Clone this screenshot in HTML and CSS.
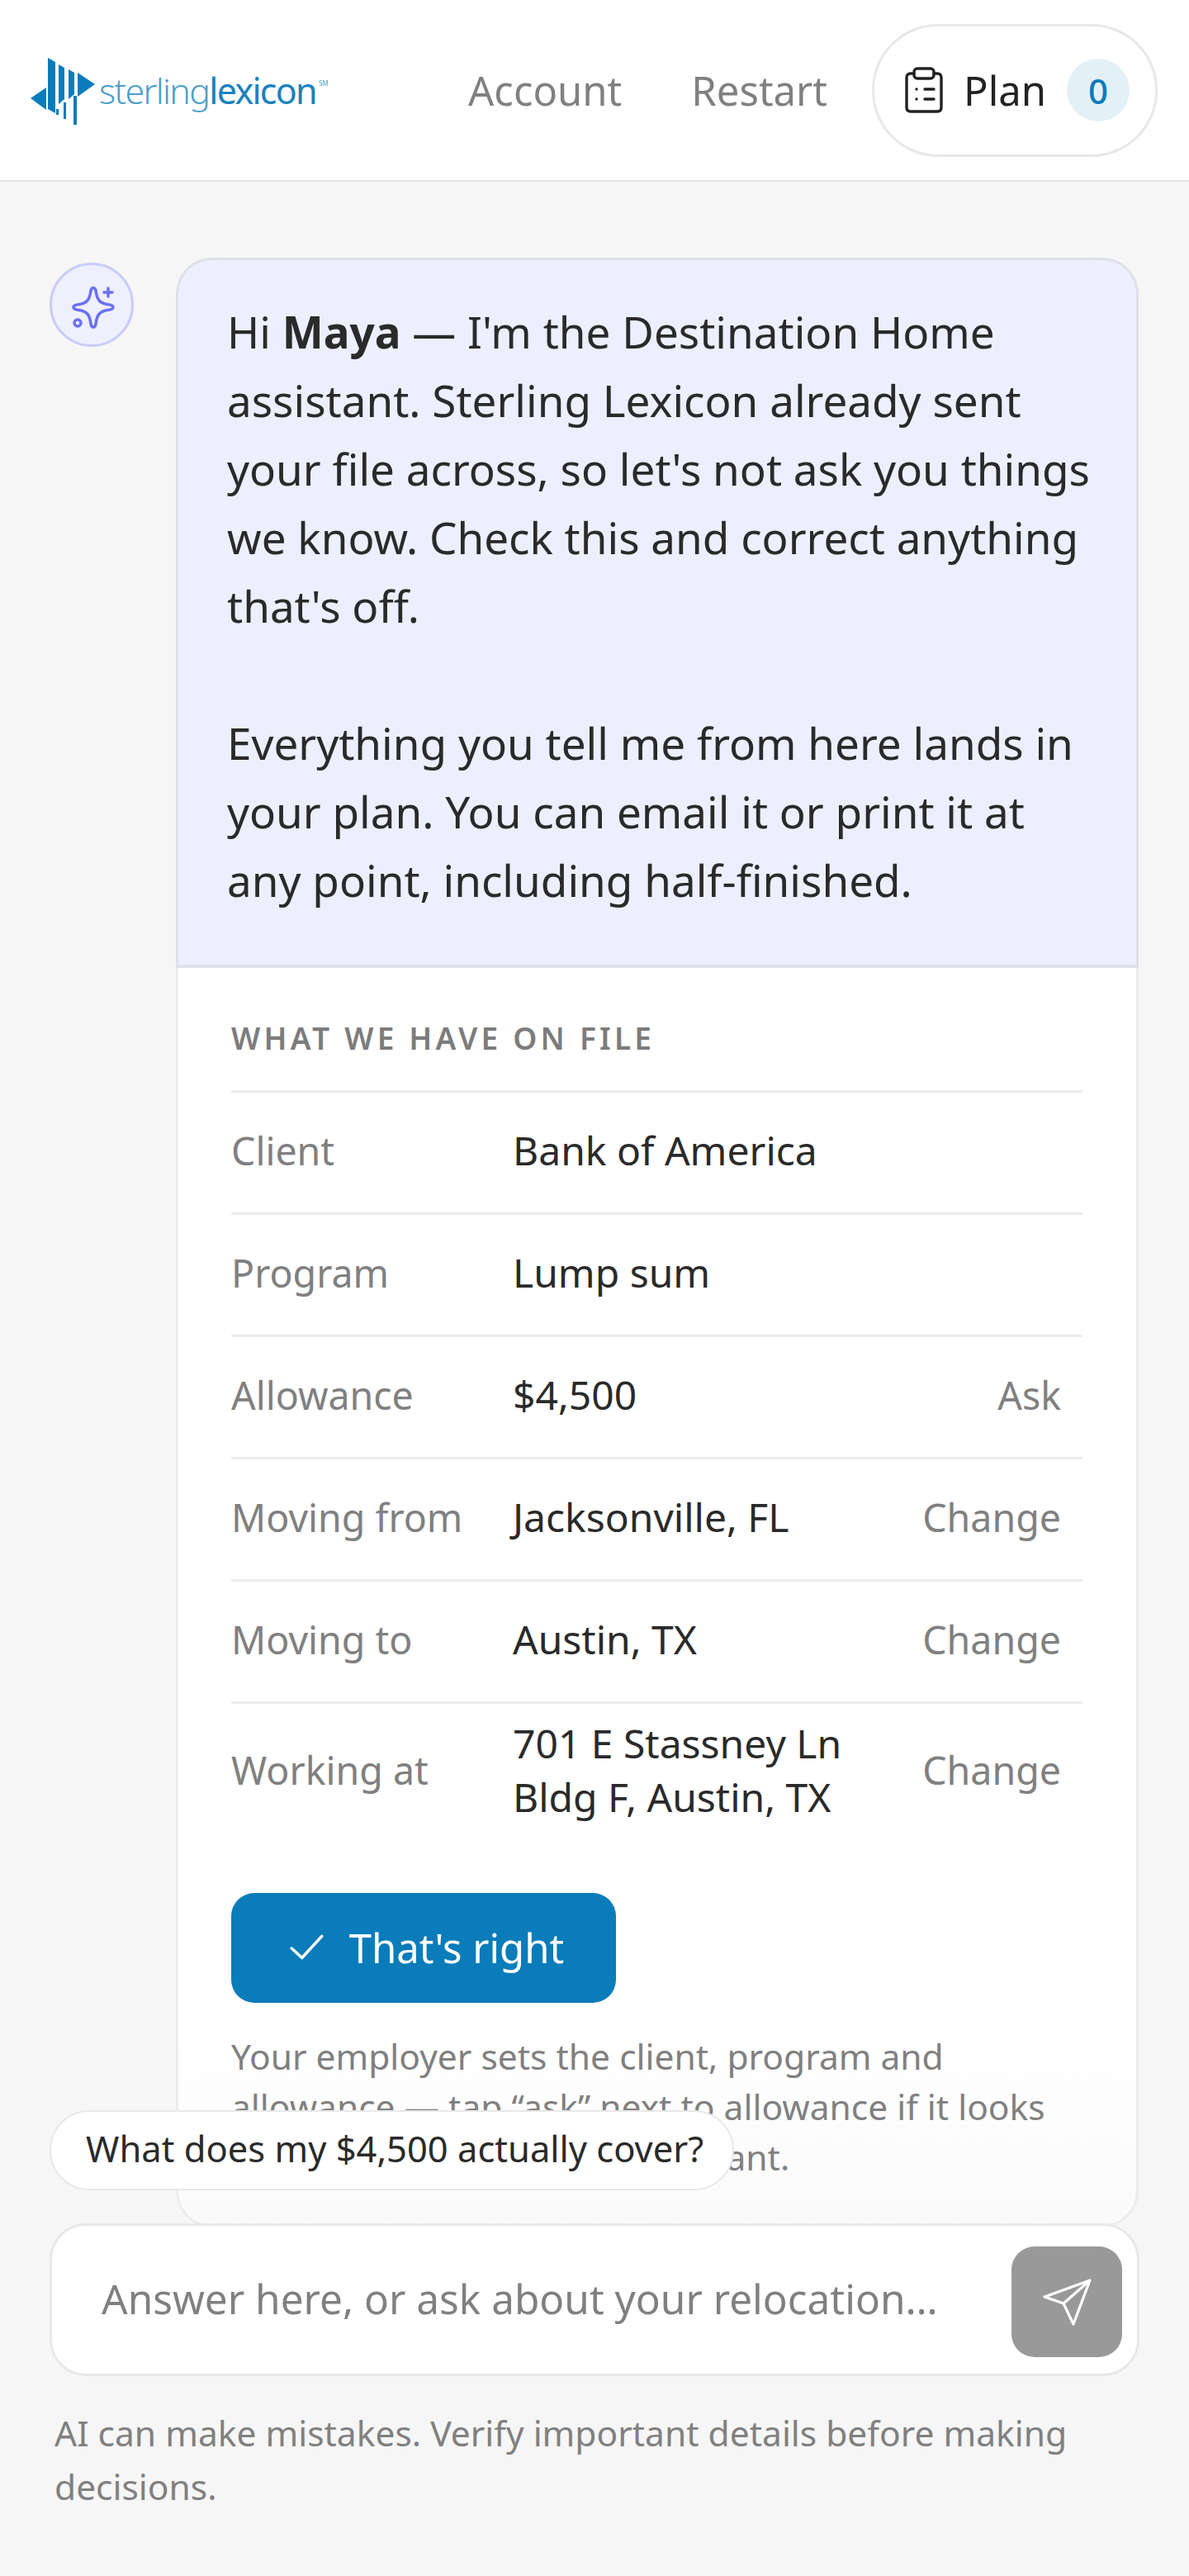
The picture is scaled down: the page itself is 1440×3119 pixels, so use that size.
FILE: index.html
```html
<!DOCTYPE html>
<html lang="en">
<head>
    <meta charset="UTF-8">
    <meta name="viewport" content="width=device-width, initial-scale=1.0">
    <title>Destination Home</title>
    <link rel="stylesheet" href="styles.css">
</head>
<body>
    <header class="topbar">
        <div class="logo">
            <svg class="logo-mark" width="78" height="81" viewBox="0 0 78 81" fill="#0a7cba">
                <path d="M57 18 L78 32 L57 47Z"/>
                <path d="M19 36 L0 49 L19 63Z"/>
                <path d="M21 0 L30 5 V67 L21 62Z"/>
                <path d="M34 8 L41 12 V50 L34 56Z"/>
                <path d="M46 14 L53 18 V44 L46 50Z"/>
                <path d="M31 62 H34 V69 H31Z M40 54 H43 V74 H40Z M52 46 H56 V81 H52Z"/>
            </svg>
            <span class="logo-text"><span class="logo-light">sterling</span><span class="logo-bold">lexicon</span><sup class="logo-sm">SM</sup></span>
        </div>
        <nav class="nav">
            <a class="nav-link nav-account">Account</a>
            <a class="nav-link">Restart</a>
            <button class="plan-btn">
                <svg width="46" height="56" viewBox="0 0 46 56" fill="none" stroke="#222" stroke-width="3.4" stroke-linecap="round" stroke-linejoin="round">
                    <path d="M11 8 H7 Q2 8 2 13 V49 Q2 54 7 54 H39 Q44 54 44 49 V13 Q44 8 39 8 H35"/>
                    <rect x="11" y="2" width="24" height="12" rx="4"/>
                    <path d="M14 27h.01M14 39h.01M24 27h11M24 39h11"/>
                </svg>
                <span>Plan</span>
                <span class="plan-count">0</span>
            </button>
        </nav>
    </header>

    <main class="chat">
        <div class="avatar">
            <svg width="60" height="60" viewBox="0 0 60 60" fill="none" stroke="#6b6ff0" stroke-width="3.5" stroke-linejoin="round" stroke-linecap="round">
                <path d="M29 7.5 C31.5 7.5 32 10 32.5 14 C34 22 37 26 46 27.5 C50 28 53 29 53 31 C53 33 50 34 46 34.5 C37 36 34 40 32.5 48 C32 52 31.5 55 29 55 C26.5 55 26 52 25.5 48 C24 40 21 36 12 34.5 C8 34 5 33 5 31 C5 29 8 28 12 27.5 C21 26 24 22 25.5 14 C26 10 26.5 7.5 29 7.5Z"/>
                <path d="M47 8v10M42 13h10"/>
                <circle cx="10" cy="50" r="4"/>
            </svg>
        </div>
        <div class="thread">
            <div class="bubble">
                <p>Hi <strong>Maya</strong> — I'm the Destination Home assistant. Sterling Lexicon already sent your file across, so let's not ask you things we know. Check this and correct anything that's off.</p>
                <p>Everything you tell me from here lands in your plan. You can email it or print it at any point, including half-finished.</p>
            </div>
            <section class="card">
                <h2 class="card-title">WHAT WE HAVE ON FILE</h2>
                <div class="row"><span class="row-label">Client</span><span class="row-value">Bank of America</span></div>
                <div class="row"><span class="row-label">Program</span><span class="row-value">Lump sum</span></div>
                <div class="row"><span class="row-label">Allowance</span><span class="row-value">$4,500</span><a class="row-action">Ask</a></div>
                <div class="row"><span class="row-label">Moving from</span><span class="row-value">Jacksonville, FL</span><a class="row-action">Change</a></div>
                <div class="row"><span class="row-label">Moving to</span><span class="row-value">Austin, TX</span><a class="row-action">Change</a></div>
                <div class="row row-tall"><span class="row-label">Working at</span><span class="row-value">701 E Stassney Ln<br>Bldg F, Austin, TX</span><a class="row-action">Change</a></div>
                <button class="confirm-btn">
                    <svg width="46" height="46" viewBox="0 0 44 44" fill="none" stroke="#fff" stroke-width="3.4" stroke-linecap="round" stroke-linejoin="round"><path d="M4 23 L16 34 L39 9"/></svg>
                    That's right
                </button>
                <p class="card-note">Your employer sets the client, program and allowance — tap “ask” next to allowance if it looks wrong, or ask your HR consultant.</p>
            </section>
        </div>
    </main>

    <div class="composer-area">
        <button class="chip">What does my $4,500 actually cover?</button>
        <div class="composer">
            <span class="placeholder">Answer here, or ask about your relocation…</span>
            <button class="send-btn">
                <svg width="64" height="64" viewBox="0 0 64 64" fill="none" stroke="#fff" stroke-width="3.2" stroke-linejoin="round"><path d="M60 6 L5 26 L28 34 L40 59 Z M60 6 L28 34"/></svg>
            </button>
        </div>
        <p class="disclaimer">AI can make mistakes. Verify important details before making decisions.</p>
    </div>
</body>
</html>
```

FILE: styles.css
```css
* {
    box-sizing: border-box;
}
html, body {
    margin: 0;
    padding: 0;
}
body {
    width: 1440px;
    height: 3119px;
    overflow: hidden;
    position: relative;
    background-color: #f6f6f6;
    font-family: "Noto Sans", sans-serif;
    color: #2a2a2a;
}
button {
    font-family: inherit;
    border: none;
}

/* top bar */
.topbar {
    height: 220px;
    background-color: #fff;
    border-bottom: 2px solid #e6e6e6;
    display: flex;
    align-items: center;
    justify-content: space-between;
    padding: 0 38px 0 37px;
}
.logo {
    display: flex;
    align-items: center;
    gap: 5px;
}
.logo-mark {
    margin-top: 3px;
}
.logo-text {
    font-size: 43px;
    letter-spacing: -1.7px;
}
.logo-light {
    font-weight: 300;
    color: #4d9fcb;
}
.logo-bold {
    font-weight: 400;
    color: #1a82bd;
}
.logo-sm {
    font-size: 8px;
    letter-spacing: 0;
    vertical-align: 22px;
    line-height: 0;
    color: #4d9fcb;
    margin-left: 3px;
}
.nav {
    display: flex;
    align-items: center;
    gap: 54px;
}
.nav-link {
    font-size: 49px;
    color: #808080;
}
.nav-account {
    margin-right: 30px;
}
.plan-btn {
    display: flex;
    align-items: center;
    height: 161px;
    width: 346px;
    padding: 0 0 0 37px;
    background-color: #fff;
    border: 3px solid #e8e8e8;
    border-radius: 80px;
    font-size: 49px;
    color: #222;
    gap: 25px;
}
.plan-count {
    width: 76px;
    height: 76px;
    border-radius: 50%;
    background-color: #e4f0f7;
    color: #0a7cba;
    font-size: 42px;
    font-weight: 500;
    display: flex;
    align-items: center;
    justify-content: center;
}

/* chat thread */
.chat {
    display: flex;
    align-items: flex-start;
    gap: 51px;
    padding: 92px 60px 0;
}
.avatar {
    flex: none;
    width: 102px;
    height: 102px;
    margin-top: 6px;
    border-radius: 50%;
    background-color: #eef0fe;
    border: 3px solid #c9cbfb;
    display: flex;
    align-items: center;
    justify-content: center;
}
.avatar svg {
    margin: 4px 0 0 5px;
}
.thread {
    width: 1166px;
}
.bubble {
    background-color: #edeffe;
    border: 3px solid #dfe0ea;
    border-bottom-width: 4px;
    border-radius: 44px 44px 0 0;
    padding: 45px 50px 0 59px;
    font-size: 53px;
    line-height: 83px;
    height: 860px;
}
.bubble p {
    margin: 0 0 83px;
}
.bubble p:last-child {
    margin-bottom: 0;
}
.bubble strong {
    font-weight: 700;
}
.card {
    background: linear-gradient(#fff 85%, #fafafa);
    border: 3px solid #ececec;
    border-top: none;
    border-radius: 0 0 44px 44px;
    padding: 60px 65px 0 64px;
    height: 1525px;
}
.card-title {
    margin: 0 0 38px;
    font-size: 37px;
    line-height: 50px;
    font-weight: 600;
    letter-spacing: 4.2px;
    color: #7c7c7c;
}
.row {
    display: flex;
    align-items: center;
    height: 148px;
    border-top: 3px solid #ececec;
    padding-bottom: 6px;
    font-size: 46.5px;
}
.row-tall {
    height: 170px;
    padding-bottom: 7px;
}
.row-label {
    width: 341px;
    flex: none;
    color: #808080;
}
.row-value {
    flex: 1;
    font-size: 48px;
    color: #2a2a2a;
    line-height: 65px;
}
.row-action {
    color: #808080;
    padding-right: 26px;
}
.confirm-btn {
    display: flex;
    align-items: center;
    justify-content: center;
    gap: 28px;
    width: 466px;
    height: 133px;
    margin-top: 62px;
    padding: 0 0 2px 6px;
    background-color: #0a7cba;
    color: #fff;
    border-radius: 28px;
    font-size: 49px;
}
.card-note {
    margin: 34px 0 0;
    font-size: 42.5px;
    line-height: 61px;
    color: #808080;
}

/* bottom input area, sits over the thread */
.composer-area {
    position: absolute;
    left: 60px;
    top: 2555px;
    width: 1320px;
}
.chip {
    display: block;
    height: 97px;
    width: 829px;
    padding: 0 42px 5px;
    background-color: #fff;
    border: 2px solid #e8e8e8;
    border-radius: 49px;
    font-size: 43.5px;
    color: #2a2a2a;
    text-align: left;
    white-space: nowrap;
}
.composer {
    margin-top: 40px;
    height: 185px;
    background-color: #fff;
    border: 3px solid #e8e8e8;
    border-radius: 44px;
    display: flex;
    align-items: center;
    justify-content: space-between;
    padding: 4px 18px 0 60px;
}
.placeholder {
    margin-bottom: 8px;
    font-size: 49.5px;
    color: #808080;
}
.send-btn {
    width: 134px;
    height: 134px;
    border-radius: 28px;
    background-color: #999;
    display: flex;
    align-items: center;
    justify-content: center;
    padding: 0;
}
.disclaimer {
    margin: 36px 0 0;
    width: 1300px;
    padding-left: 6px;
    font-size: 42.5px;
    line-height: 65px;
    color: #808080;
}
```
